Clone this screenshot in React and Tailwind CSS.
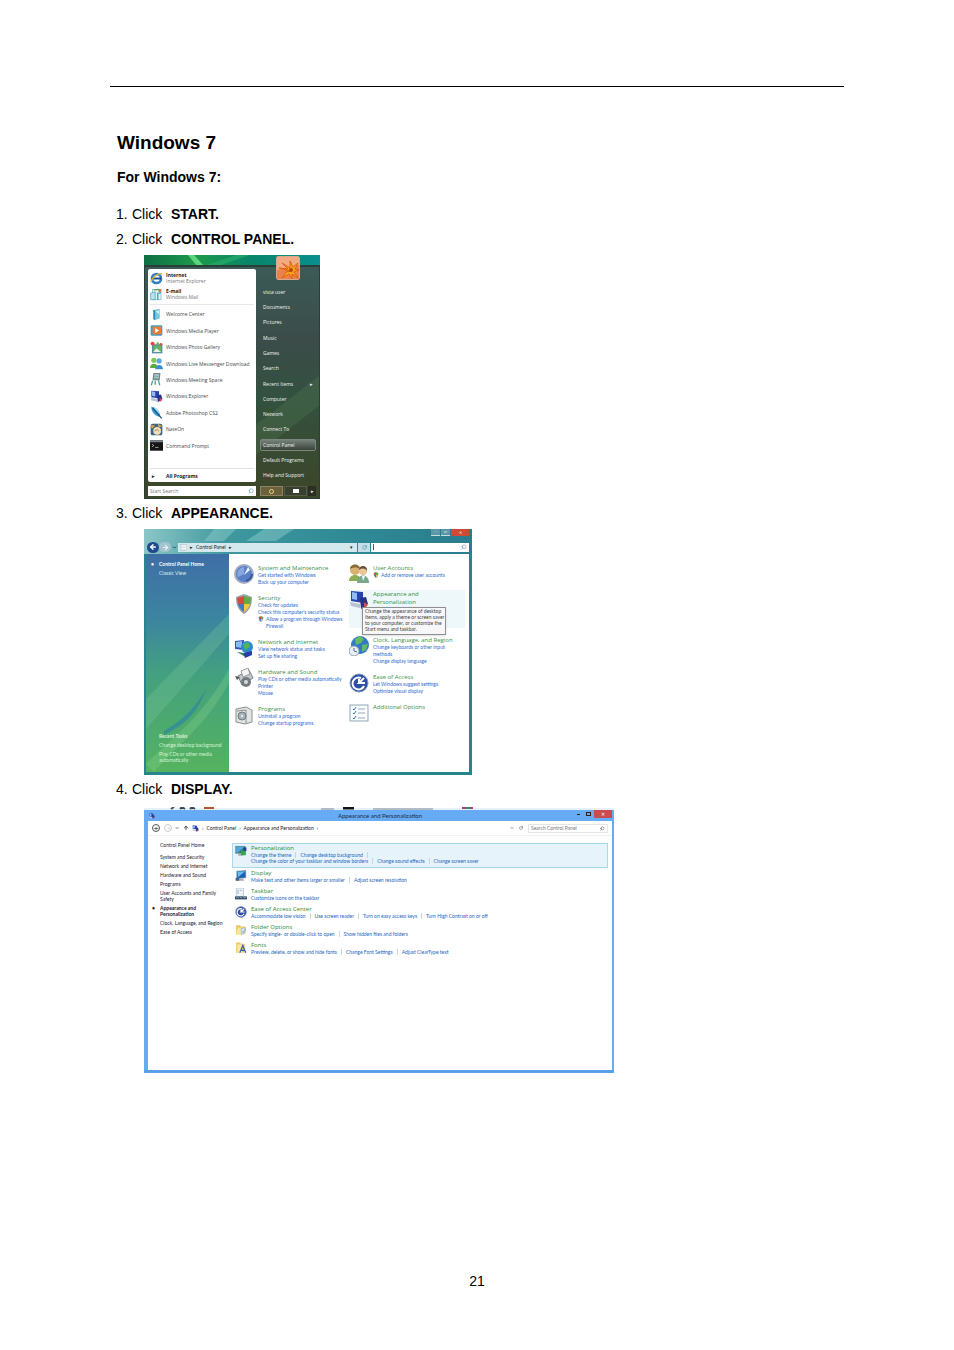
import { ArrowLeft, ArrowRight, ArrowUp, ChevronDown, RotateCw, Search } from "lucide-react";

const programs = [
  { label: "Welcome Center", icon: "book" },
  { label: "Windows Media Player", icon: "media" },
  { label: "Windows Photo Gallery", icon: "photo" },
  { label: "Windows Live Messenger Download", icon: "people" },
  { label: "Windows Meeting Space", icon: "meeting" },
  { label: "Windows Explorer", icon: "monitor" },
  { label: "Adobe Photoshop CS2", icon: "feather" },
  { label: "NateOn", icon: "nate" },
  { label: "Command Prompt", icon: "prompt" },
];

const places = [
  "vista user",
  "Documents",
  "Pictures",
  "Music",
  "Games",
  "Search",
  "Recent Items",
  "Computer",
  "Network",
  "Connect To",
  "Control Panel",
  "Default Programs",
  "Help and Support",
];

const leftGroups = [
  { title: "System and Maintenance", icon: "clock", links: ["Get started with Windows", "Back up your computer"] },
  {
    title: "Security",
    icon: "shield",
    links: ["Check for updates", "Check this computer's security status"],
    shielded: ["Allow a program through Windows", "Firewall"],
  },
  { title: "Network and Internet", icon: "network", links: ["View network status and tasks", "Set up file sharing"] },
  {
    title: "Hardware and Sound",
    icon: "printer",
    links: ["Play CDs or other media automatically", "Printer", "Mouse"],
  },
  { title: "Programs", icon: "box", links: ["Uninstall a program", "Change startup programs"] },
];

const rightGroups = [
  { title: "User Accounts", icon: "users", links: [], shielded: ["Add or remove user accounts"] },
  { title: "Appearance and Personalization", icon: "monitor", links: [], active: true },
  {
    title: "Clock, Language, and Region",
    icon: "globe",
    links: ["Change keyboards or other input", "methods", "Change display language"],
  },
  { title: "Ease of Access", icon: "ease", links: ["Let Windows suggest settings", "Optimize visual display"] },
  { title: "Additional Options", icon: "list", links: [] },
];

const categories = [
  "System and Security",
  "Network and Internet",
  "Hardware and Sound",
  "Programs",
  "User Accounts and Family Safety",
  "Appearance and Personalization",
  "Clock, Language, and Region",
  "Ease of Access",
];

const settings = [
  {
    title: "Personalization",
    icon: "personalize",
    rows: [
      ["Change the theme", "Change desktop background", ""],
      ["Change the color of your taskbar and window borders", "Change sound effects", "Change screen saver"],
    ],
    active: true,
  },
  {
    title: "Display",
    icon: "display",
    rows: [["Make text and other items larger or smaller", "Adjust screen resolution"]],
  },
  { title: "Taskbar", icon: "taskbar", rows: [["Customize icons on the taskbar"]] },
  {
    title: "Ease of Access Center",
    icon: "ease",
    rows: [["Accommodate low vision", "Use screen reader", "Turn on easy access keys", "Turn High Contrast on or off"]],
  },
  {
    title: "Folder Options",
    icon: "folder",
    rows: [["Specify single- or double-click to open", "Show hidden files and folders"]],
  },
  {
    title: "Fonts",
    icon: "fonts",
    rows: [["Preview, delete, or show and hide fonts", "Change Font Settings", "Adjust ClearType text"]],
  },
];

const drawings = {
  ie: (
    <>
      <circle cx="10" cy="10" r="7" fill="none" stroke="#2f7fc4" strokeWidth="4" />
      <path d="M4 10h13" stroke="#1d4f8f" strokeWidth="3" />
      <path d="M1 16C3 8 13 1 19 3" fill="none" stroke="#e3b63c" strokeWidth="2" />
    </>
  ),
  mail: (
    <>
      <rect x="4" y="2" width="13" height="16" fill="#e4f3f5" stroke="#6bb5c2" strokeWidth="1" />
      <path d="M1 18V8l7-2v12z" fill="#bfe2ea" stroke="#3a9bb8" strokeWidth="1" />
      <path d="M12 18V8l5-1" fill="none" stroke="#3a9bb8" strokeWidth="2" />
      <path d="M6 3l8-1" stroke="#55a765" strokeWidth="2" />
      <circle cx="15" cy="4" r="2" fill="#e0603d" />
    </>
  ),
  book: (
    <>
      <path d="M5 3l10-2v15L6 19z" fill="#7cc8e0" />
      <path d="M5 3l3 1v15l-3-2z" fill="#2f8fb0" />
      <path d="M9 5l5-1v6z" fill="#d5f1f8" />
    </>
  ),
  media: (
    <>
      <rect x="1" y="2" width="18" height="16" rx="2" fill="#3f9fbe" />
      <rect x="4" y="4" width="13" height="12" fill="#ef7b34" />
      <path d="M8 6l6 4-6 4z" fill="#fff" />
    </>
  ),
  photo: (
    <>
      <rect x="4" y="6" width="14" height="12" fill="#6ab06b" stroke="#578da1" strokeWidth="2" />
      <path d="M5 17l5-6 7 6z" fill="#e5f5e6" />
      <circle cx="4" cy="4" r="3" fill="#e2473b" />
      <circle cx="12" cy="4" r="2" fill="#74ab55" />
      <circle cx="17" cy="5" r="2" fill="#ca5b45" />
    </>
  ),
  people: (
    <>
      <circle cx="6" cy="5" r="4" fill="#83c553" />
      <path d="M0 17c0-9 12-9 12 0z" fill="#5aab37" />
      <circle cx="14" cy="6" r="4" fill="#58a9dc" />
      <path d="M8 19c0-9 12-9 12 0z" fill="#3c8dcb" />
    </>
  ),
  meeting: (
    <>
      <path d="M6 1h9l-1 9H5z" fill="#b9cdd0" stroke="#71898f" strokeWidth="2" />
      <path d="M4 12l-2 7M13 11l2 8M8 12v6" stroke="#5a9c92" strokeWidth="2" />
      <path d="M7 5h6M6 8h6" stroke="#4e8f8d" strokeWidth="1" />
    </>
  ),
  monitor: (
    <>
      <path d="M2 1l12 1v11L2 11z" fill="#2842b0" />
      <path d="M3 2l5 1v7l-5-1z" fill="#93bdf2" />
      <path d="M1 12l10 2v4l-9-2z" fill="#b7c4d4" />
      <path d="M11 8l6-1 2 7-7 5z" fill="#25348b" />
      <path d="M15 12l4 3-4 4z" fill="#cf4c60" />
    </>
  ),
  feather: (
    <>
      <path d="M2 1c9 1 13 7 14 16C7 15 2 9 2 1z" fill="#3d9ed6" />
      <path d="M4 3l14 16" stroke="#1c527e" strokeWidth="2" />
      <path d="M5 2c7 2 9 7 9 10z" fill="#a9ddf5" />
    </>
  ),
  nate: (
    <>
      <rect x="1" y="1" width="18" height="18" rx="3" fill="#3d6586" />
      <circle cx="11" cy="12" r="6" fill="#f3dfb4" />
      <path d="M1 3l7 1-5 5zM12 1l7 4-6 2z" fill="#e3a04b" />
      <path d="M7 12l4-2 3 3" fill="none" stroke="#7a6748" strokeWidth="1" />
    </>
  ),
  prompt: (
    <>
      <rect x="0" y="2" width="20" height="16" fill="#151515" />
      <rect x="0" y="2" width="20" height="3" fill="#77818c" />
      <path d="M3 8l3 2-3 2M8 13h5" fill="none" stroke="#ddd" strokeWidth="1" />
    </>
  ),
  clock: (
    <>
      <circle cx="10" cy="10" r="9" fill="#5b80c8" stroke="#a4adc0" strokeWidth="2" />
      <path d="M10 10V3a7 7 0 0 0-6 10z" fill="#86a8e0" />
      <path d="M10 11l4-8 2 3z" fill="#eef4ff" />
      <path d="M12 17a8 8 0 0 0 6-7" fill="none" stroke="#31549c" strokeWidth="2" />
    </>
  ),
  shield: (
    <>
      <path d="M10 0l8 3c0 8-2 13-8 17C4 16 2 11 2 3z" fill="#99a3a8" />
      <path d="M10 2v8H4L3 4z" fill="#d8493b" />
      <path d="M10 2l7 2-1 6h-6z" fill="#63aa43" />
      <path d="M4 10h6v8c-3-2-5-5-6-8z" fill="#3e78c9" />
      <path d="M16 10h-6v8c3-2 5-5 6-8z" fill="#f0c93f" />
    </>
  ),
  network: (
    <>
      <path d="M1 3l9-1v10l-9-1z" fill="#3656b6" />
      <path d="M2 4l6-1v7l-6-1z" fill="#8abdf0" />
      <circle cx="13" cy="9" r="6" fill="#2c8ad0" />
      <path d="M9 6l5-2 2 5-5 3z" fill="#54b451" />
      <path d="M9 15l9-2v4l-7 3z" fill="#2b3f9c" />
      <path d="M3 14l7 1v3z" fill="#2a7d61" />
    </>
  ),
  printer: (
    <>
      <path d="M4 8l11-6 4 8-11 7z" fill="#c4c8ca" stroke="#777d80" strokeWidth="1" />
      <path d="M7 3l7-3 2 6-7 3z" fill="#f4f4f4" stroke="#999" strokeWidth="1" />
      <circle cx="12" cy="14" r="5" fill="#737b80" />
      <circle cx="12" cy="14" r="2" fill="#d9dcdd" />
      <path d="M1 8l5 1-3 3z" fill="#52585b" />
    </>
  ),
  box: (
    <>
      <path d="M2 4l10-2 6 3v12l-7 2-9-2z" fill="#e2e4e4" stroke="#8b9193" strokeWidth="1" />
      <path d="M3 6l9-1v13" fill="none" stroke="#8b9193" strokeWidth="1" />
      <circle cx="8" cy="11" r="4" fill="#a9b2b7" stroke="#727a7e" strokeWidth="1" />
      <circle cx="8" cy="11" r="1" fill="#fff" />
    </>
  ),
  users: (
    <>
      <circle cx="6" cy="6" r="5" fill="#d9b272" />
      <path d="M1 5c0-6 10-6 10 0-3-2-7-2-10 0z" fill="#8a6a35" />
      <path d="M0 17c0-8 12-8 12 0z" fill="#8fae55" />
      <circle cx="14" cy="7" r="4" fill="#ecc595" />
      <path d="M10 6c0-6 9-5 8 1-2-3-5-3-8-1z" fill="#64503b" />
      <path d="M8 19c0-10 12-10 12 0z" fill="#79a98c" />
      <path d="M13 12l1 5 2-5z" fill="#fff" />
    </>
  ),
  globe: (
    <>
      <circle cx="11" cy="9" r="9" fill="#3479c5" />
      <path d="M6 3l5-3 4 3-3 4-5 2zM13 9l6-1-2 6-4 2z" fill="#64bb60" />
      <circle cx="5" cy="15" r="5" fill="#e8eef2" stroke="#8ca0ac" strokeWidth="1" />
      <path d="M5 12v3l3 1" fill="none" stroke="#526e80" strokeWidth="1" />
    </>
  ),
  ease: (
    <>
      <circle cx="10" cy="10" r="9" fill="#2c4ea7" stroke="#8495bd" strokeWidth="1" />
      <path d="M12 5a6 6 0 1 0 3 8" fill="none" stroke="#fff" strokeWidth="2" />
      <path d="M15 5l-5 5h6M10 10V6" fill="none" stroke="#fff" strokeWidth="2" />
    </>
  ),
  list: (
    <>
      <rect x="1" y="2" width="18" height="16" fill="#fafcfd" stroke="#90a5b4" strokeWidth="1" />
      <path d="M4 6l1 1 2-3M4 10l1 1 2-3M4 15l1 1 2-3" fill="none" stroke="#2c77b8" strokeWidth="1" />
      <path d="M9 6h7M9 10h7M9 15h7" stroke="#9aabb5" strokeWidth="1" />
    </>
  ),
  personalize: (
    <>
      <rect x="1" y="2" width="16" height="12" fill="#277a68" stroke="#7d95a5" strokeWidth="1" />
      <path d="M2 3h14L5 13H2z" fill="#4fa7e0" />
      <path d="M6 14h6l2 4H5z" fill="#a6b2ba" />
      <path d="M10 9h8v8h-8z" fill="#35a554" />
      <path d="M14 4h5v6h-5z" fill="#22429e" />
    </>
  ),
  display: (
    <>
      <path d="M3 2l15-1v12L3 14z" fill="#1762b4" stroke="#7890a5" strokeWidth="1" />
      <path d="M4 3l13-1L5 12z" fill="#67baf0" />
      <path d="M8 14h5l3 4H5z" fill="#a4afb9" />
      <path d="M1 13h6v5H1z" fill="#3c6687" />
    </>
  ),
  taskbar: (
    <>
      <rect x="2" y="0" width="12" height="14" fill="#edf4f8" stroke="#9cb2bf" strokeWidth="1" />
      <path d="M5 3v7M8 4h3" stroke="#548db6" strokeWidth="1" />
      <rect x="0" y="14" width="20" height="5" fill="#35506c" />
      <path d="M2 16h4M8 16h4M14 16h4" stroke="#b4cbe0" strokeWidth="1" />
    </>
  ),
  folder: (
    <>
      <path d="M2 2h6l2 2h7v13H2z" fill="#e9c45d" />
      <path d="M5 6h13l-3 12H2z" fill="#f9e4a0" />
      <path d="M10 8l7-2v7l-6 5z" fill="#d8e6ef" stroke="#8aa9be" strokeWidth="1" />
      <path d="M12 12l2 2 4-6" fill="none" stroke="#3e84bb" strokeWidth="1" />
    </>
  ),
  fonts: (
    <>
      <path d="M2 1h6l2 2h6v15H2z" fill="#efc75b" />
      <path d="M4 4h8v14H4z" fill="#fae7aa" />
      <path d="M8 18l5-12 5 12M10 14h6" fill="none" stroke="#315fa9" strokeWidth="2" />
    </>
  ),
};

function Icon({ name, className }) {
  return (
    <svg viewBox="0 0 20 20" className={className} aria-hidden="true">
      {drawings[name]}
    </svg>
  );
}

function Step({ number, target, children }) {
  return (
    <li>
      <p className="flex leading-[25px] whitespace-nowrap">
        <span className="w-4">{number}.</span>
        <span className="w-[39px]">Click</span>
        <strong>{target}</strong>
      </p>
      {children && <div className="ml-[28px] mt-[3px] mb-[2px]">{children}</div>}
    </li>
  );
}

function StartMenu() {
  return (
    <div className="relative flex w-[176px] gap-1 overflow-hidden px-1 pb-[3px] font-['Open_Sans',sans-serif] text-[5px] leading-[6px]">
      <svg viewBox="0 0 176 244" className="absolute inset-0 h-full w-full" aria-hidden="true">
        <defs>
          <linearGradient id="menuBack" x1="0" y1="0" x2="0" y2="1">
            <stop offset="0" stopColor="#3c5d59" />
            <stop offset="0.35" stopColor="#3b4c49" />
            <stop offset="0.6" stopColor="#33513f" />
            <stop offset="1" stopColor="#3d4527" />
          </linearGradient>
          <linearGradient id="menuTop" x1="0" y1="0" x2="1" y2="0">
            <stop offset="0" stopColor="#0d6f45" />
            <stop offset="0.3" stopColor="#1f9a4c" />
            <stop offset="0.6" stopColor="#098568" />
            <stop offset="1" stopColor="#0a8f90" />
          </linearGradient>
        </defs>
        <rect width="176" height="244" fill="url(#menuBack)" />
        <rect width="176" height="11" fill="url(#menuTop)" />
        <path d="M44 0h6l10 11h-7z" fill="#5fd67c" />
        <path d="M60 11L92 0h14L74 11z" fill="#2ab070" opacity="0.6" />
        <path d="M112 170L176 120v30l-64 50z" fill="#4f7550" opacity="0.35" />
        <path d="M0 11h176v233H0z" fill="none" stroke="#2b3f38" strokeWidth="2" />
      </svg>

      <div className="relative w-[108px] pt-[14px]">
        <div className="flex h-[213px] flex-col rounded-[2px] bg-white pt-px pl-[2px] text-[#484848]">
          {[
            ["Internet", "Internet Explorer", "ie"],
            ["E-mail", "Windows Mail", "mail"],
          ].map(([name, app, icon]) => (
            <button key={name} className="flex h-4 items-center gap-[3px] text-left">
              <Icon name={icon} className="h-[13px] w-[13px]" />
              <span>
                <b className="block text-[#222]">{name}</b>
                <span className="block text-[#777]">{app}</span>
              </span>
            </button>
          ))}
          <div className="mt-[2px] mr-[2px] h-[2px] border-t border-[#e8e8e8]" />
          <div className="flex h-[148px] flex-col">
            {programs.map((item) => (
              <button key={item.label} className="flex flex-1 items-center gap-[3px] text-left whitespace-nowrap">
                <Icon name={item.icon} className="h-[13px] w-[13px]" />
                {item.label}
              </button>
            ))}
          </div>
          <button className="mt-auto mr-[2px] flex h-[14px] items-center border-t border-[#e0e0e0] pl-[2px] font-bold text-[#222]">
            <span className="w-[14px] text-left">▸</span>
            All Programs
          </button>
        </div>
        <label className="mt-1 flex h-[10px] items-center bg-white px-[2px]">
          <input
            aria-label="Start Search"
            placeholder="Start Search"
            className="w-full min-w-0 flex-1 leading-[6px] outline-none placeholder:text-[#777]"
          />
          <Search size={6} color="#4387bd" className="-scale-x-100" />
        </label>
      </div>

      <div className="relative flex w-[56px] flex-col pt-px text-[#f0f4f2]">
        <svg viewBox="0 0 24 24" className="mx-4 h-6 w-6 rounded-[2px]" aria-hidden="true">
          <rect width="24" height="24" rx="2" fill="#d9a88c" />
          <rect x="1" y="1" width="22" height="22" fill="#e8824e" />
          <path d="M1 1h22v8L1 14z" fill="#f1ab84" />
          <path
            d="M14 15L3 12l9 1-6-6 8 5 0-7 3 6 5-4-3 6 4 1-5 2 4 6-6-4 0 5-3-5-7 4 4-6z"
            fill="#f7a21c"
            stroke="#e0620f"
            strokeWidth="1"
          />
          <circle cx="15" cy="14" r="2" fill="#b5480e" />
        </svg>
        <div className="mt-[4px] flex flex-1 flex-col">
          {places.map((place) => (
            <button key={place} className="flex flex-1 items-center whitespace-nowrap">
              <span
                className={
                  place === "Control Panel"
                    ? "flex h-3 w-full items-center rounded-[2px] border border-[#7b867f] bg-linear-to-b from-[#77827b] to-[#38443a] pl-[2px]"
                    : "flex w-full items-center justify-between px-[3px]"
                }
              >
                {place}
                {place === "Recent Items" && <span>▸</span>}
              </span>
            </button>
          ))}
        </div>
        <div className="mt-[3px] flex h-[10px] gap-px">
          <button aria-label="Sleep" className="flex flex-1 items-center justify-center border border-[#8d8561] bg-[#6b613a]">
            <span className="h-[5px] w-[5px] rounded-full border border-[#efd58c]" />
          </button>
          <button aria-label="Lock" className="flex flex-1 items-center justify-center border border-[#555a49] bg-[#3a4030]">
            <span className="h-1 w-[6px] bg-white" />
          </button>
          <button aria-label="More options" className="w-2 bg-[#2a2f24]">
            ▸
          </button>
        </div>
      </div>
    </div>
  );
}

function PanelGroup({ group }) {
  return (
    <section className={group.active ? "flex h-[38px] gap-1 bg-[#eef8fb]" : "flex min-h-[18px] gap-1"}>
      <Icon name={group.icon} className="h-5 w-5 shrink-0 -mb-[2px]" />
      <div className="min-w-0 whitespace-nowrap">
        <h3
          className={
            group.active
              ? "w-[60px] font-['Open_Sans',sans-serif] text-[6px] leading-[8px] whitespace-normal text-[#38903f]"
              : "font-['Open_Sans',sans-serif] text-[6px] leading-[8px] text-[#38903f]"
          }
        >
          {group.title}
        </h3>
        {group.links.map((link) => (
          <a key={link} href="#" className="block">
            {link}
          </a>
        ))}
        {group.shielded && (
          <a href="#" className="flex gap-[2px]">
            <Icon name="shield" className="h-[6px] w-[6px]" />
            <span>
              {group.shielded.map((line) => (
                <span key={line} className="block">
                  {line}
                </span>
              ))}
            </span>
          </a>
        )}
      </div>
    </section>
  );
}

function VistaPanel() {
  return (
    <div className="relative w-[328px] overflow-hidden bg-[#27868d] px-[3px] pb-[3px] font-['Lato',sans-serif] text-[5px] leading-[7px]">
      <svg viewBox="0 0 328 246" className="absolute inset-0 h-full w-full" aria-hidden="true">
        <defs>
          <linearGradient id="aero" x1="0" y1="0" x2="1" y2="0">
            <stop offset="0" stopColor="#8cc6c6" />
            <stop offset="0.25" stopColor="#3f989e" />
            <stop offset="0.6" stopColor="#2f8b96" />
            <stop offset="1" stopColor="#2a7c8e" />
          </linearGradient>
          <linearGradient id="side" x1="0" y1="0" x2="0" y2="1">
            <stop offset="0" stopColor="#3f6ea7" />
            <stop offset="0.3" stopColor="#3c85a0" />
            <stop offset="0.55" stopColor="#43a07f" />
            <stop offset="1" stopColor="#55b35f" />
          </linearGradient>
        </defs>
        <rect width="328" height="25" fill="url(#aero)" />
        <path d="M70 0h22l-12 12H60zM120 0h30l-18 12h-30z" fill="#9bd8d4" opacity="0.4" />
        <rect x="2" y="25" width="83" height="218" fill="url(#side)" />
        <path d="M2 170L85 85v20L2 200z" fill="#7ac79a" opacity="0.3" />
        <path d="M20 202c20-12 30-22 42-42-8 24-22 36-42 46z" fill="#2f86a0" opacity="0.7" />
        <path d="M2 235c30-30 55-45 83-95v14c-25 45-50 60-75 89z" fill="#8bd48c" opacity="0.3" />
      </svg>

      <div className="relative flex h-[12px] justify-end gap-px">
        <button aria-label="Minimize" className="h-[7px] w-[9px] border-b border-[#bfdde2] bg-[#5c98a6] text-[4px] leading-[6px] text-white">–</button>
        <button aria-label="Maximize" className="h-[7px] w-[9px] border-b border-[#bfdde2] bg-[#5c98a6] text-[4px] leading-[6px] text-white">□</button>
        <button aria-label="Close" className="h-[7px] w-[18px] bg-[#cf4a35] text-[4px] leading-[6px] text-white">✕</button>
      </div>

      <div className="relative flex h-[13px] items-center pb-px">
        <button aria-label="Back" className="flex h-[11px] w-[12px] items-center justify-center rounded-full bg-[#1e4b8f]">
          <ArrowLeft size={8} color="#fff" strokeWidth={4} />
        </button>
        <button aria-label="Forward" className="flex h-[10px] w-[12px] items-center justify-center rounded-full bg-[#a4c3cf]">
          <ArrowRight size={7} color="#e9f4f6" strokeWidth={4} />
        </button>
        <ChevronDown size={5} color="#103f50" className="mx-px" strokeWidth={4} />
        <div className="flex h-[9px] flex-1 items-center justify-between bg-[#d3e9ed] pr-1 pl-[2px] text-[#222]">
          <span className="flex items-center gap-[3px]">
            <Icon name="list" className="h-[7px] w-[7px]" />
            <span>▸</span>
            <span>Control Panel</span>
            <span>▸</span>
          </span>
          <span>▾</span>
        </div>
        <button aria-label="Refresh" className="mx-px flex h-[9px] w-[12px] items-center justify-center bg-[#c4dfe6]">
          <RotateCw size={5} color="#2f7893" />
        </button>
        <label className="flex h-[9px] w-[98px] items-center bg-white px-[2px]">
          <input aria-label="Search" className="w-full min-w-0 border-l border-[#555] leading-[6px] outline-none" />
          <Search size={6} color="#4387bd" className="-scale-x-100" />
        </label>
      </div>

      <div className="relative flex min-h-[218px]">
        <nav className="flex w-[82px] flex-col pt-[7px] pb-[9px] pl-[12px] whitespace-nowrap text-[#dceff2]">
          <a href="#" className="-ml-2 flex font-bold text-white">
            <span className="w-2">•</span>Control Panel Home
          </a>
          <a href="#" className="mt-[2px]">Classic View</a>
          <div className="mt-auto text-[#d5f3d8]">
            <h3 className="font-bold">Recent Tasks</h3>
            <a href="#" className="mt-[2px] block">Change desktop background</a>
            <a href="#" className="mt-[2px] block w-[60px] leading-[6px] whitespace-normal">
              Play CDs or other media automatically
            </a>
          </div>
        </nav>
        <div className="flex flex-1 bg-white pt-[10px] pl-[5px] text-[#2f6cd0]">
          <div className="flex w-[115px] flex-col gap-2">
            {leftGroups.map((group) => (
              <PanelGroup key={group.title} group={group} />
            ))}
          </div>
          <div className="relative flex w-[116px] flex-col gap-2">
            {rightGroups.map((group) => (
              <PanelGroup key={group.title} group={group} />
            ))}
            <div
              role="tooltip"
              className="absolute top-[43px] left-[13px] w-[84px] border border-[#8f8f8f] bg-[#f7f7fa] px-[2px] pb-[2px] leading-[6px] whitespace-nowrap text-[#444] shadow-sm"
            >
              Change the appearance of desktop
              <br />
              items, apply a theme or screen saver
              <br />
              to your computer, or customize the
              <br />
              Start menu and taskbar.
            </div>
          </div>
        </div>
      </div>
    </div>
  );
}

function AppearanceWindow() {
  return (
    <div className="w-[470px] font-['Lato',sans-serif] text-[5px] leading-[6px] text-[#222]">
      <svg viewBox="0 0 470 3" className="mt-[5px] block h-[3px] w-full" aria-hidden="true">
        <path d="M0 2h470" stroke="#cfe0ee" strokeWidth="1" />
        <path d="M27 2l3-2M36 2l2-2 3 2M46 2l2-2 3 2" stroke="#3d5265" strokeWidth="2" />
        <path d="M60 1h10" stroke="#b5562c" strokeWidth="2" />
        <path d="M177 2h13M229 2h60" stroke="#7d8994" strokeWidth="1" />
        <path d="M199 1h11" stroke="#111" strokeWidth="3" />
        <path d="M318 1h4M326 1h3" stroke="#a23c94" strokeWidth="2" />
        <path d="M322 1h4" stroke="#37904c" strokeWidth="2" />
      </svg>
      <div className="border-b-[3px] border-[#5a9fea] bg-[#68abf5] pr-[2px] pl-1">
        <header className="relative flex h-[11px] items-center justify-between">
          <Icon name="monitor" className="ml-px h-[6px] w-[6px]" />
          <h2 className="absolute inset-x-0 text-center text-[6px] text-[#1b2f44]">Appearance and Personalization</h2>
          <div className="relative flex self-start leading-[8px]">
            <button aria-label="Minimize" className="flex h-2 w-[10px] items-center justify-center">
              <span className="h-px w-[3px] bg-[#222]" />
            </button>
            <button aria-label="Maximize" className="flex h-2 w-[11px] items-center justify-center">
              <span className="h-1 w-[5px] border border-[#222]" />
            </button>
            <button aria-label="Close" className="h-2 w-[18px] bg-[#ca4c50] text-white">✕</button>
          </div>
        </header>

        <div className="bg-white">
          <div className="flex h-[15px] items-center border-b border-[#f2f2f2] pr-1 pl-1 whitespace-nowrap">
            <button aria-label="Back" className="flex h-2 w-2 items-center justify-center rounded-full border border-[#555]">
              <ArrowLeft size={5} strokeWidth={3} />
            </button>
            <button aria-label="Forward" className="ml-1 flex h-2 w-2 items-center justify-center rounded-full border border-[#ccc]">
              <ArrowRight size={5} color="#bbb" />
            </button>
            <ChevronDown size={4} className="mx-[3px]" strokeWidth={4} />
            <ArrowUp size={6} className="ml-px" strokeWidth={3} />
            <div className="ml-[3px] flex flex-1 items-center gap-[3px]">
              <Icon name="monitor" className="h-[7px] w-[7px]" />
              <span>›</span>
              <span>Control Panel</span>
              <span>›</span>
              <span>Appearance and Personalization</span>
              <span>›</span>
            </div>
            <ChevronDown size={4} strokeWidth={3} />
            <button aria-label="Refresh" className="mx-[5px]">
              <RotateCw size={4} />
            </button>
            <label className="flex h-[9px] w-[80px] items-center border border-[#e5e5e5] px-[2px]">
              <input
                aria-label="Search Control Panel"
                placeholder="Search Control Panel"
                className="w-full min-w-0 leading-[6px] outline-none placeholder:text-[#777]"
              />
              <Search size={5} className="-scale-x-100" />
            </label>
          </div>

          <div className="flex min-h-[234px] pt-[7px] pr-[4px]">
            <nav className="-mt-px flex w-[84px] flex-col gap-[3px] pl-3 text-[#223]">
              <a href="#" className="mb-[3px]">Control Panel Home</a>
              {categories.map((name) => (
                <a
                  key={name}
                  href="#"
                  className={
                    name === "Appearance and Personalization"
                      ? "-ml-2 flex w-[56px] font-bold before:w-2 before:shrink-0 before:content-['•']"
                      : "w-[64px]"
                  }
                >
                  {name}
                </a>
              ))}
            </nav>
            <div className="flex-1 whitespace-nowrap">
              {settings.map((item) => (
                <section
                  key={item.title}
                  className={
                    item.active
                      ? "mb-px flex h-[25px] gap-1 border border-[#a9d8ee] bg-[#e6f3fb] pl-[2px]"
                      : "flex h-[18px] gap-1 pl-[3px]"
                  }
                >
                  <Icon name={item.icon} className="mt-px h-3 w-3 shrink-0" />
                  <div>
                    <h3 className="font-['Open_Sans',sans-serif] text-[6px] leading-[8px] text-[#2c8a35]">{item.title}</h3>
                    {item.rows.map((row) => (
                      <p key={row[0]} className="flex">
                        {row.map((link, i) => (
                          <a
                            key={link}
                            href="#"
                            className={i === 0 ? "text-[#1c66bd]" : "ml-1 border-l border-[#c9d6e0] pl-1 text-[#1c66bd]"}
                          >
                            {link}
                          </a>
                        ))}
                      </p>
                    ))}
                  </div>
                </section>
              ))}
            </div>
          </div>
        </div>
      </div>
    </div>
  );
}

export default function App() {
  return (
    <div className="min-h-screen bg-white px-[110px] pt-[86px] pb-[56px] font-['Liberation_Sans',sans-serif] text-[14px] text-black">
      <main className="border-t border-black px-[6px]">
        <h1 className="mt-[44px] ml-px text-[19px] leading-[24px] font-bold">Windows 7</h1>
        <h2 className="mt-[12px] ml-px leading-5 font-bold">For Windows 7:</h2>
        <ol className="mt-[15px]">
          <Step number={1} target="START." />
          <Step number={2} target="CONTROL PANEL.">
            <StartMenu />
          </Step>
          <Step number={3} target="APPEARANCE.">
            <VistaPanel />
          </Step>
          <Step number={4} target="DISPLAY.">
            <AppearanceWindow />
          </Step>
        </ol>
      </main>
      <footer className="mt-[198px] text-center leading-5">21</footer>
    </div>
  );
}
